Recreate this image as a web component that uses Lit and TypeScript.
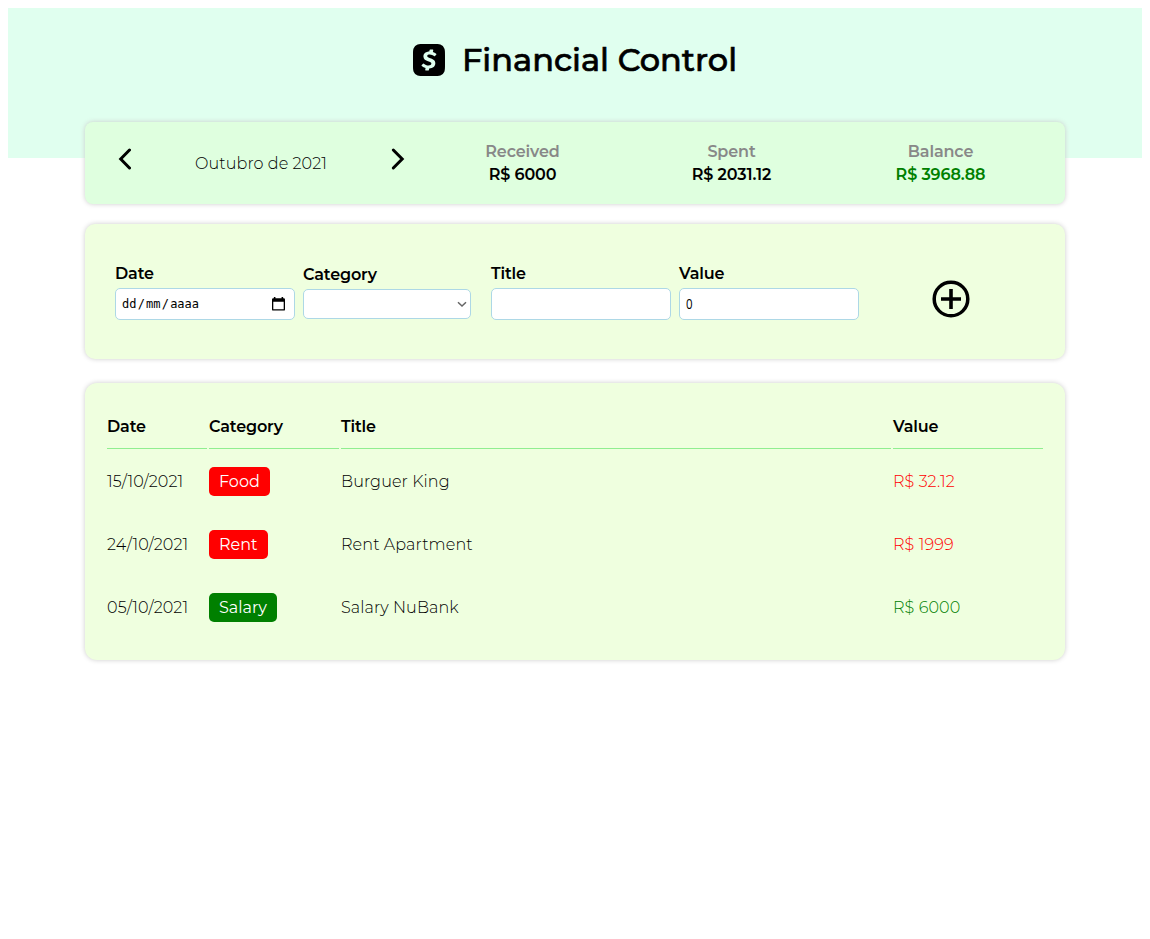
import { LitElement, html, css, svg } from "lit";
import { customElement } from "lit/decorators.js";

interface Item {
  date: string;
  category: string;
  kind: string;
  title: string;
  value: string;
}

const items: Item[] = [
  { date: "15/10/2021", category: "Food", kind: "food", title: "Burguer King", value: "R$ 32.12" },
  { date: "24/10/2021", category: "Rent", kind: "rent", title: "Rent Apartment", value: "R$ 1999" },
  { date: "05/10/2021", category: "Salary", kind: "salary", title: "Salary NuBank", value: "R$ 6000" },
];

const cashPath =
  "M23.59 3.475a5.1 5.1 0 00-3.05-3.05c-1.31-.42-2.5-.42-4.92-.42H8.36c-2.4 0-3.61 0-4.9.4a5.1 5.1 0 00-3.05 3.06C0 4.765 0 5.965 0 8.365v7.27c0 2.41 0 3.6.4 4.9a5.1 5.1 0 003.05 3.05c1.3.41 2.5.41 4.9.41h7.28c2.41 0 3.61 0 4.9-.4a5.1 5.1 0 003.06-3.06c.41-1.3.41-2.5.41-4.9v-7.25c0-2.41 0-3.61-.41-4.91zm-6.17 4.63l-.93.93a.5.5 0 01-.67.01 5 5 0 00-3.22-1.18c-.97 0-1.94.32-1.94 1.21 0 .9 1.04 1.2 2.24 1.65 2.1.7 3.84 1.58 3.84 3.64 0 2.24-1.74 3.78-4.58 3.95l-.26 1.2a.49.49 0 01-.48.39H9.63l-.09-.01a.5.5 0 01-.38-.59l.28-1.27a6.54 6.54 0 01-2.88-1.57v-.01a.48.48 0 010-.68l1-.97a.49.49 0 01.67 0c.91.86 2.13 1.34 3.39 1.32 1.3 0 2.17-.55 2.17-1.42 0-.87-.88-1.1-2.54-1.72-1.76-.63-3.43-1.52-3.43-3.6 0-2.42 2.01-3.6 4.39-3.71l.25-1.23a.48.48 0 01.48-.38h1.78l.1.01c.26.06.43.31.37.57l-.27 1.37c.9.3 1.75.77 2.48 1.39l.02.02c.19.2.19.5 0 .68z";

const chevron = (points: string) => html`<svg class="chevron" width="14" height="24" viewBox="0 0 14 24">
  ${svg`<polyline points=${points} fill="none" stroke="#000" stroke-width="3" stroke-linecap="round" stroke-linejoin="miter"></polyline>`}
</svg>`;

@customElement("app-root")
export class AppRoot extends LitElement {
  static styles = css`
    :host {
      display: block;
      padding: 8px;
      font-family: Montserrat, Inter, sans-serif;
      font-size: 16px;
      font-weight: 300;
      line-height: 20px;
      color: #000;
    }
    .header {
      height: 150px;
      background: #e0ffef;
      display: flex;
      justify-content: center;
      align-items: flex-start;
    }
    .brand {
      display: flex;
      align-items: center;
      gap: 17px;
      height: 32px;
      width: 324px;
      margin-top: 36px;
      white-space: nowrap;
    }
    .brand svg { flex: none; }
    h1 {
      margin: 0;
      font-size: 32px;
      line-height: 32px;
      font-weight: 500;
      -webkit-text-stroke: 0.65px #000;
    }
    .main {
      width: 980px;
      margin: -36px auto 0;
      display: flex;
      flex-direction: column;
    }
    .panel {
      box-sizing: border-box;
      box-shadow: 0 0 5px #ccc;
      background: #efffdf;
    }
    .info {
      height: 82px;
      border-radius: 8px;
      background: #dfffdf;
      padding: 20px;
      display: flex;
    }
    .month {
      width: 313px;
      display: flex;
      align-items: flex-start;
      justify-content: space-between;
      box-sizing: border-box;
      padding: 5px 13px 0 12px;
    }
    .month span { padding-top: 7px; letter-spacing: 0.08px; }
    .stats {
      flex: 1;
      display: flex;
    }
    .stat {
      flex: 1;
      text-align: center;
      font-weight: 600;
      letter-spacing: -0.12px;
      line-height: 23px;
      margin-top: -2px;
    }
    .stat .name { color: #888; }
    .green { color: green; }
    .red { color: red; }
    .form {
      margin-top: 20px;
      height: 135px;
      border-radius: 10px;
      padding: 40px 30px 0;
      display: flex;
      align-items: flex-start;
    }
    .field { width: 188px; }
    .field.cat { padding-top: 1px; }
    .field label {
      display: block;
      font-weight: 600;
      letter-spacing: -0.15px;
      height: 20px;
      margin-bottom: 4px;
    }
    .box {
      box-sizing: border-box;
      width: 180px;
      height: 32px;
      border: 1px solid lightblue;
      border-radius: 5px;
      background: #fff;
      padding: 0 6px;
      display: flex;
      align-items: center;
    }
    .cat .box {
      width: 168px;
      height: 30px;
      justify-content: flex-end;
      padding-right: 3px;
    }
    .date .box { font: 12px/20px "DejaVu Sans Mono", monospace; padding-right: 9px; }
    .date .slash { padding: 0 1.2px; }
    .date svg { margin: 0 0 1px auto; }
    .zero {
      font: 14px/20px "Open Sans", sans-serif;
      transform: scaleX(0.82);
      transform-origin: left;
      margin-left: -0.5px;
      padding-bottom: 1px;
    }
    .add { margin: 16px 0 0 65px; height: 38px; }
    .list {
      margin-top: 24px;
      height: 277px;
      border-radius: 12px;
      padding: 20px;
    }
    table {
      width: 940px;
      table-layout: fixed;
      border-spacing: 2px;
    }
    th, td { padding: 0; text-align: left; }
    th {
      height: 44px;
      box-sizing: border-box;
      border-bottom: 1px solid lightgreen;
      font-weight: 600;
      letter-spacing: -0.15px;
    }
    td { height: 61px; letter-spacing: 0.1px; }
    .c-date { width: 100px; }
    .c-cat { width: 130px; }
    .c-val { width: 150px; }
    .tag {
      display: inline-block;
      padding: 0 10px;
      height: 29px;
      line-height: 29px;
      border-radius: 5px;
      color: #fff;
      font-weight: 400;
      letter-spacing: 0;
      background: red;
      vertical-align: middle;
    }
    .tag.salary { background: green; }
  `;

  render() {
    return html`
      <header class="header">
        <div class="brand">
          <svg width="32" height="32" viewBox="0 0 24 24"><path d=${cashPath}></path></svg>
          <h1>Financial Control</h1>
        </div>
      </header>
      <main class="main">
        <section class="panel info">
          <div class="month">
            ${chevron("12.5,3 3.7,12 12.5,21")}
            <span>Outubro de 2021</span>
            ${chevron("2.3,3 11.2,12 2.3,21")}
          </div>
          <div class="stats">
            <div class="stat"><div class="name">Received</div><div>R$ 6000</div></div>
            <div class="stat"><div class="name">Spent</div><div>R$ 2031.12</div></div>
            <div class="stat"><div class="name">Balance</div><div class="green">R$ 3968.88</div></div>
          </div>
        </section>
        <section class="panel form">
          <div class="field date">
            <label>Date</label>
            <div class="box">
              <span>dd</span><span class="slash">/</span><span>mm</span><span class="slash">/</span><span>aaaa</span>
              <svg width="13" height="14" viewBox="0 0 14 15">
                <path fill-rule="evenodd" d="M2 0h1.7v1.4h6.6V0H12v1.4h.7q1.3 0 1.3 1.3v10.6q0 1.3-1.3 1.3H1.3Q0 14.6 0 13.3V2.7q0-1.3 1.3-1.3H2zM1.4 5v8.2h11.2V5z"></path>
              </svg>
            </div>
          </div>
          <div class="field cat">
            <label>Category</label>
            <div class="box">
              <svg width="10" height="8" viewBox="0 0 10 8"><polyline points="1,2.2 5,6 9,2.2" fill="none" stroke="#666" stroke-width="1.5"></polyline></svg>
            </div>
          </div>
          <div class="field"><label>Title</label><div class="box"></div></div>
          <div class="field"><label>Value</label><div class="box"><span class="zero">0</span></div></div>
          <svg class="add" width="38" height="38" viewBox="0 0 38 38">
            <circle cx="19" cy="19" r="16.8" fill="none" stroke="#000" stroke-width="3.5"></circle>
            <path d="M9 19H29M19 9V29" stroke="#000" stroke-width="3.6"></path>
          </svg>
        </section>
        <section class="panel list">
          <table>
            <thead>
              <tr><th class="c-date">Date</th><th class="c-cat">Category</th><th>Title</th><th class="c-val">Value</th></tr>
            </thead>
            <tbody>
              ${items.map(
                (i) => html`<tr>
                  <td>${i.date}</td>
                  <td><span class="tag ${i.kind}">${i.category}</span></td>
                  <td>${i.title}</td>
                  <td class=${i.kind === "salary" ? "green" : "red"}>${i.value}</td>
                </tr>`
              )}
            </tbody>
          </table>
        </section>
      </main>
    `;
  }
}
